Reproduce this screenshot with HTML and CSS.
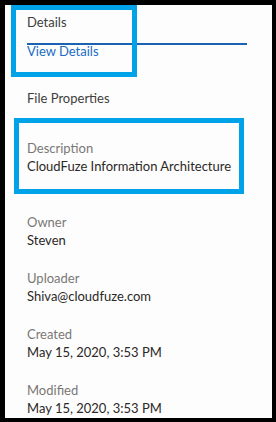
FILE: index.html
```html
<!DOCTYPE html>
<html lang="en">
<head>
    <meta charset="UTF-8">
    <meta name="viewport" content="width=device-width, initial-scale=1.0">
    <title>File Details</title>
    <link rel="stylesheet" href="styles.css">
</head>
<body>
    <div class="frame">
        <div class="panel">
            <div class="panel-title">Details</div>
            <div class="tab-bar">
                <a class="tab-link" href="#">View Details</a>
            </div>

            <div class="section-title">File Properties</div>

            <div class="field field-first">
                <div class="field-label">Description</div>
                <div class="field-value">CloudFuze Information Architecture</div>
            </div>
            <div class="field field-owner">
                <div class="field-label">Owner</div>
                <div class="field-value">Steven</div>
            </div>
            <div class="field">
                <div class="field-label">Uploader</div>
                <div class="field-value">Shiva@cloudfuze.com</div>
            </div>
            <div class="field">
                <div class="field-label">Created</div>
                <div class="field-value">May 15, 2020, 3:53 PM</div>
            </div>
            <div class="field">
                <div class="field-label">Modified</div>
                <div class="field-value">May 15, 2020, 3:53 PM</div>
            </div>
        </div>

        <!-- highlight boxes drawn over the screenshot -->
        <div class="highlight highlight-header"></div>
        <div class="highlight highlight-desc"></div>
    </div>
</body>
</html>
```

FILE: styles.css
```css
body {
    margin: 0;
    background-color: #000;
    font-family: Lato, 'Open Sans', sans-serif;
    font-size: 13px;
    line-height: 18px;
}
.frame {
    position: relative;
    height: 422px;
    box-sizing: border-box;
    padding: 5px 4px 4px 5px;
    overflow: hidden;
}
.panel {
    height: 100%;
    background-color: #fdfdfd;
    padding: 8px 0 0 22px;
    box-sizing: border-box;
    overflow: hidden;
}
.panel-title {
    color: #3e3e3c;
    margin-bottom: 12px;
}
.tab-bar {
    width: 220px;
    border-top: 2px solid #1b62b3;
}
.tab-link {
    display: block;
    color: #1a6dc4;
    text-decoration: none;
    line-height: 13px;
}
.section-title {
    color: #3e3e3c;
    margin-top: 31px;
}
.field {
    margin-top: 20px;
}
.field-first {
    margin-top: 32px;
}
.field-owner {
    margin-top: 38px;
}
.field-label {
    color: #7a7876;
}
.field-value {
    color: #2b2826;
}
.highlight {
    position: absolute;
    border: 5px solid #00a2e8;
    box-sizing: border-box;
}
.highlight-header {
    left: 11px;
    top: 5px;
    width: 126px;
    height: 72px;
}
.highlight-desc {
    left: 14px;
    top: 118px;
    width: 230px;
    height: 76px;
}
```
